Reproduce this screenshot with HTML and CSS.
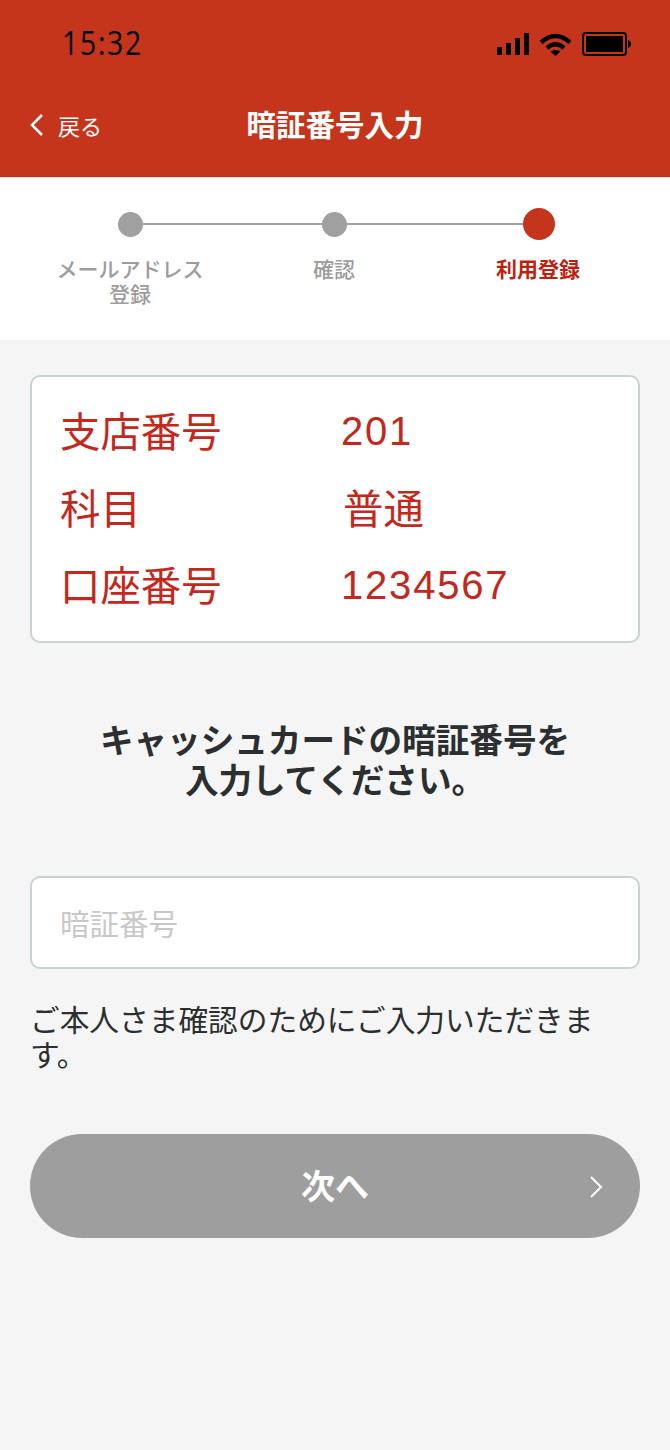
FILE: index.html
```html
<!DOCTYPE html>
<html lang="ja">

<head>
    <meta charset="UTF-8">
    <meta name="viewport" content="width=device-width, initial-scale=1.0">
    <title>暗証番号入力</title>
    <link rel="stylesheet" href="styles.css">
</head>

<body>
    <header class="app-header">
        <div class="status-bar">
            <span class="status-time">15:32</span>
            <div class="status-icons">
                <svg width="32" height="22" viewBox="0 0 32 22">
                    <rect x="0" y="14" width="5" height="8" />
                    <rect x="9" y="10" width="5" height="12" />
                    <rect x="18" y="5" width="5" height="17" />
                    <rect x="27" y="0" width="5" height="22" />
                </svg>
                <svg width="33" height="23" viewBox="0 0 33 23">
                    <path class="wifi-arc" d="M2 9.5 Q16.5 -3.5 31 9.5" />
                    <path class="wifi-arc" d="M8 15 Q16.5 7.5 25 15" />
                    <path d="M11.5 18.5 Q16.5 15 21.5 18.5 L16.5 23Z" />
                </svg>
                <svg width="49" height="24" viewBox="0 0 49 24">
                    <rect class="battery-case" x="1" y="1" width="43" height="22" rx="3" />
                    <rect x="4" y="4" width="37" height="16" />
                    <path d="M46 8 L49 10 V14 L46 16Z" />
                </svg>
            </div>
        </div>
        <div class="nav-bar">
            <a class="back-link">
                <svg width="14" height="22" viewBox="0 0 14 22">
                    <path d="M12 1 L2 11 L12 21" />
                </svg>
                戻る
            </a>
            <h1>暗証番号入力</h1>
        </div>
    </header>

    <section class="steps">
        <div class="step-track">
            <span class="step-dot"></span>
            <span class="step-line step-line-first"></span>
            <span class="step-dot"></span>
            <span class="step-line step-line-second"></span>
            <span class="step-dot step-dot-active"></span>
        </div>
        <div class="step-labels">
            <div>メールアドレス<br>登録</div>
            <div>確認</div>
            <div class="step-label-active">利用登録</div>
        </div>
    </section>

    <main class="content">
        <div class="account-card">
            <div class="account-row"><span class="account-key">支店番号</span><span class="account-num">201</span></div>
            <div class="account-row"><span class="account-key">科目</span><span class="account-value">普通</span></div>
            <div class="account-row"><span class="account-key">口座番号</span><span class="account-num">1234567</span></div>
        </div>

        <h2 class="prompt">キャッシュカードの暗証番号を<br>入力してください。</h2>

        <div class="pin-input">暗証番号</div>
        <p class="note">ご本人さま確認のためにご入力いただきます。</p>

        <button class="next-button">
            次へ
            <svg width="14" height="22" viewBox="0 0 14 22">
                <path d="M2 1 L12 11 L2 21" />
            </svg>
        </button>
    </main>
</body>

</html>
```

FILE: styles.css
```css
* {
    box-sizing: border-box;
    margin: 0;
    padding: 0;
}

body {
    font-family: "Noto Sans CJK JP", "Noto Sans", sans-serif;
    background-color: #f5f5f5;
    color: #2b2f30;
    min-height: 1450px;
}

/* Header */
.app-header {
    height: 178px;
    background-color: #c4351c;
    border-bottom: 1px solid #d9dfe0;
}

.status-bar {
    height: 88px;
    padding: 22px 39px 0 62px;
    display: flex;
    justify-content: space-between;
    align-items: flex-start;
}

.status-time {
    font-family: "Open Sans", sans-serif;
    font-size: 33px;
    line-height: 42px;
    color: #000;
    letter-spacing: 2px;
    transform: scaleX(0.86);
    transform-origin: left center;
}

.status-icons {
    display: flex;
    align-items: center;
    gap: 10px;
    margin-top: 10px;
}

.wifi-arc {
    fill: none;
    stroke: #000;
    stroke-width: 4.5;
}

.battery-case {
    fill: none;
    stroke: #000;
    stroke-width: 2;
}

.nav-bar {
    height: 74px;
    padding: 0 30px 4px;
    position: relative;
    display: flex;
    align-items: center;
    justify-content: center;
}

.back-link {
    position: absolute;
    left: 30px;
    top: 21px;
    display: flex;
    align-items: center;
    gap: 14px;
    font-size: 22px;
    color: #fff;
}

.back-link svg {
    margin-top: -1px;
}

.back-link svg path {
    stroke-width: 2.5;
}

.back-link svg path,
.next-button svg path {
    fill: none;
    stroke: #fff;
}

.next-button svg path {
    stroke-width: 2;
}

.nav-bar h1 {
    font-size: 29.5px;
    font-weight: 700;
    color: #fff;
}

/* Steps */
.steps {
    height: 162px;
    background-color: #fff;
    padding-top: 30px;
}

.step-track {
    height: 32px;
    padding-left: 118px;
    display: flex;
    align-items: center;
}

.step-dot {
    width: 25px;
    height: 25px;
    border-radius: 50%;
    background-color: #a0a0a0;
}

.step-dot-active {
    width: 32px;
    height: 32px;
    margin-left: -1px;
    background-color: #c4351c;
}

.step-line {
    height: 2px;
    background-color: #a0a0a0;
}

.step-line-first {
    width: 179px;
}

.step-line-second {
    width: 177px;
}

.step-labels {
    margin-top: 16px;
    padding-left: 28px;
    display: grid;
    grid-template-columns: repeat(3, 204px);
    text-align: center;
    font-size: 21px;
    line-height: 25px;
    font-weight: 500;
    color: #9c9c9c;
}

.step-label-active {
    font-weight: 700;
    color: #c01f10;
}

/* Main */
.content {
    padding: 35px 30px 0;
}

.account-card {
    height: 268px;
    padding: 14px 28px 0;
    background-color: #fff;
    border: 2px solid #c9d3d3;
    border-radius: 10px;
}

.account-row {
    height: 77px;
    display: flex;
    align-items: center;
    color: #c4281c;
    font-size: 40.4px;
}

.account-key {
    width: 281px;
}

.account-num {
    font-family: "Liberation Sans", sans-serif;
    font-size: 40px;
    letter-spacing: 1.8px;
    margin-top: 3px;
}

.account-value {
    margin-left: 2px;
}

.prompt {
    margin-top: 76px;
    text-align: center;
    font-size: 33.6px;
    line-height: 40px;
    font-weight: 700;
}

.pin-input {
    margin-top: 77px;
    height: 93px;
    padding-left: 28px;
    padding-bottom: 2px;
    display: flex;
    align-items: center;
    background-color: #fff;
    border: 2px solid #c9d3d3;
    border-radius: 10px;
    font-size: 29.5px;
    color: #c8c8c8;
}

.note {
    margin-top: 32px;
    font-size: 29.7px;
    line-height: 35px;
}

.next-button {
    margin-top: 63px;
    width: 100%;
    height: 104px;
    padding-bottom: 3px;
    border: none;
    border-radius: 52px;
    background-color: #9e9e9e;
    position: relative;
    font-family: inherit;
    font-size: 34px;
    font-weight: 700;
    color: #fff;
}

.next-button svg {
    position: absolute;
    right: 37px;
    top: 42px;
}
```
